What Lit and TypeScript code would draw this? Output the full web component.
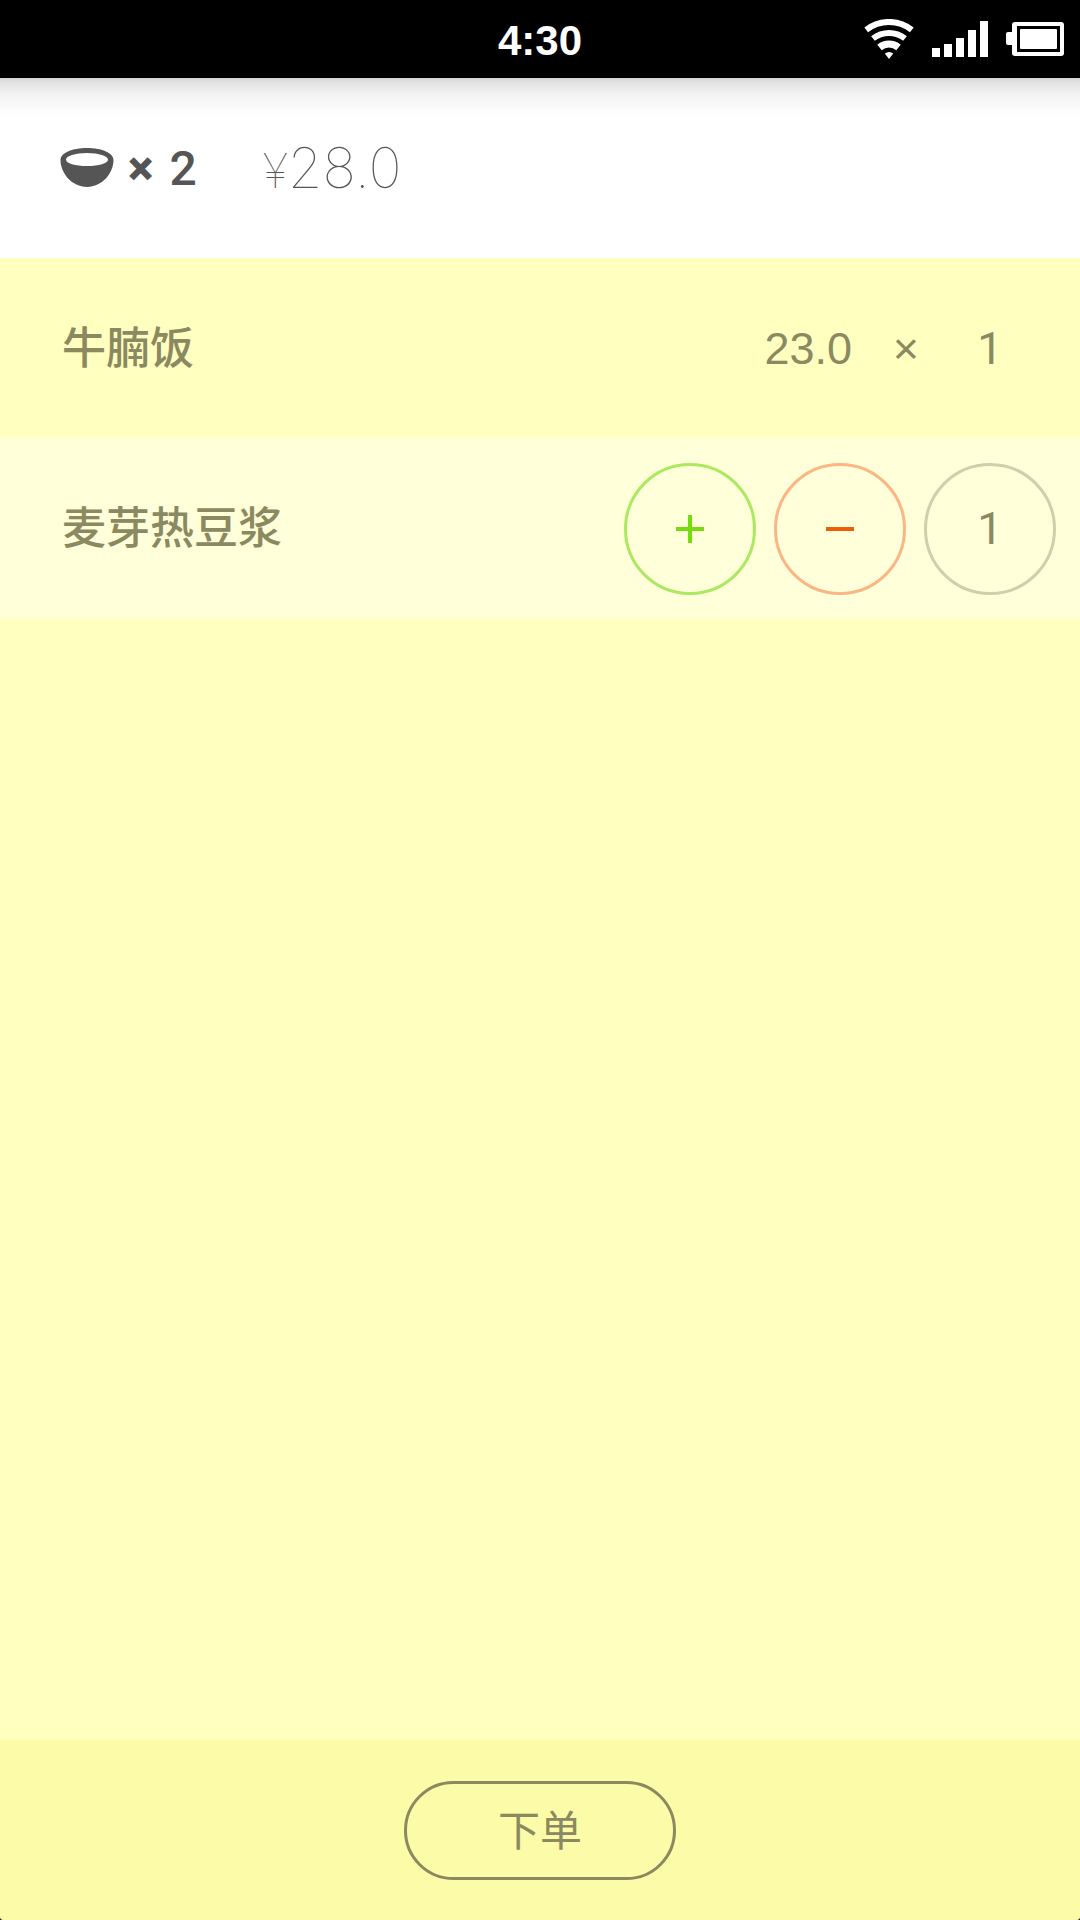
import { LitElement, html, css, svg } from "lit";
import { customElement, state } from "lit/decorators.js";

interface Dish {
  name: string;
  price: number;
  count: number;
}

const wifiIcon = svg`
  <svg width="50" height="40" viewBox="0 0 50 40" aria-hidden="true">
    <g fill="none" stroke="#fff" stroke-width="6">
      <path d="M2.200 10.8A37 37 0 0 1 47.8 10.8" />
      <path d="M9 19.5A26 26 0 0 1 41 19.5" />
      <path d="M15.5 28.5A15 15 0 0 1 34.5 28.5" stroke-width="7" />
    </g>
    <path d="M25 40L20.8 34.6Q25 31.4 29.2 34.6Z" fill="#fff" />
  </svg>`;

const signalIcon = svg`
  <svg width="56" height="36" viewBox="0 0 56 36" fill="#fff" aria-hidden="true">
    <rect x="0" y="27" width="8" height="9" />
    <rect x="12" y="23" width="8" height="13" />
    <rect x="24" y="17" width="8" height="19" />
    <rect x="36" y="9" width="8" height="27" />
    <rect x="48" y="0" width="8" height="36" />
  </svg>`;

const batteryIcon = svg`
  <svg width="58" height="34" viewBox="0 0 58 34" aria-hidden="true">
    <rect x="0" y="10" width="8" height="13" rx="2" fill="#fff" />
    <rect x="6" y="0" width="52" height="34" rx="3" fill="#fff" />
    <rect x="11" y="4" width="43" height="26" fill="#000" />
    <rect x="14" y="7" width="37" height="20" rx="1" fill="#fff" />
  </svg>`;

const bowlIcon = svg`
  <svg width="54" height="40" viewBox="0 0 54 40" aria-hidden="true">
    <path
      fill="#555"
      fill-rule="evenodd"
      d="M27 0C42 0 53.500 5 53.500 12C53.500 25 42 39 27 39C12 39 .5 25 .5 12C.5 5 12 0 27 0ZM27 5C15 5 6 8 6 11.500C6 15.500 15 18 27 18C39 18 48 15.500 48 11.500C48 8 39 5 27 5Z"
    />
  </svg>`;

@customElement("app-root")
export class AppRoot extends LitElement {
  static styles = css`
    :host {
      display: flex;
      flex-direction: column;
      min-height: 100vh;
      background: #000;
      color: #8b8960;
      font-family: "Liberation Sans", "Noto Sans CJK SC", sans-serif;
      font-size: 45px;
      line-height: 54px;
    }
    svg {
      display: block;
    }
    .status {
      display: grid;
      grid-template-columns: 1fr auto 1fr;
      align-items: center;
      height: 78px;
      color: #fff;
    }
    .clock {
      grid-column: 2;
      padding-top: 4px;
      font-size: 42px;
      font-weight: 700;
    }
    .indicators {
      display: flex;
      justify-content: flex-end;
      align-items: center;
      gap: 18px;
      padding-right: 16px;
    }
    .summary {
      display: flex;
      align-items: center;
      height: 180px;
      padding: 0 60px;
      box-sizing: border-box;
      background: linear-gradient(#d2d2d2, #e2e2e2 4px, #f4f4f4 18px, #fff 40px);
      color: #555;
    }
    .times,
    .total-count {
      padding-top: 2px;
      font-family: Roboto, sans-serif;
      font-size: 48px;
    }
    .times {
      margin-left: 14px;
      font-weight: 900;
    }
    .total-count {
      margin-left: 16px;
      font-weight: 500;
    }
    .total-price {
      display: flex;
      align-items: baseline;
      margin-left: 66px;
      padding-top: 2px;
      font-family: Inter, sans-serif;
      font-size: 56px;
      font-weight: 100;
    }
    .currency {
      font-size: 48px;
    }
    .dishes {
      flex: 1;
      margin: 0;
      padding: 0;
      list-style: none;
      background: #ffffc0;
    }
    .dish {
      display: flex;
      align-items: center;
      height: 180px;
      padding: 2px 24px 0 62px;
      box-sizing: border-box;
    }
    .dish.editing {
      gap: 18px;
      background: #ffffd9;
    }
    .name {
      flex: 1;
      font-size: 44px;
      font-weight: 500;
    }
    .by {
      width: 36px;
      margin-left: 36px;
      text-align: center;
    }
    .count {
      width: 132px;
      text-align: center;
      font-family: Roboto, sans-serif;
    }
    .round {
      display: flex;
      align-items: center;
      justify-content: center;
      width: 132px;
      height: 132px;
      padding: 0;
      box-sizing: border-box;
      border: 3px solid #cfcfa8;
      border-radius: 50%;
      background: none;
    }
    .add {
      border-color: #ace961;
    }
    .remove {
      border-color: #fcb585;
    }
    .footer {
      display: flex;
      align-items: center;
      justify-content: center;
      height: 180px;
      border-radius: 0 0 3px 3px;
      background: #fcfba8;
    }
    .order {
      padding: 4px 91px 0;
      height: 99px;
      box-sizing: border-box;
      border: 3px solid #8b8960;
      border-radius: 50px;
      background: none;
      color: inherit;
      font: inherit;
      font-size: 42px;
    }
  `;

  @state() private dishes: Dish[] = [
    { name: "牛腩饭", price: 23, count: 1 },
    { name: "麦芽热豆浆", price: 5, count: 1 },
  ];

  @state() private selected = 1;

  private change(index: number, step: number) {
    this.dishes = this.dishes.map((dish, i) =>
      i === index ? { ...dish, count: Math.max(0, dish.count + step) } : dish
    );
  }

  private renderDish(dish: Dish, index: number) {
    if (index === this.selected) {
      return html`
        <li class="dish editing">
          <span class="name">${dish.name}</span>
          <button class="round add" aria-label="增加" @click=${() => this.change(index, 1)}>
            <svg width="28" height="28" viewBox="0 0 28 28" aria-hidden="true">
              <path d="M0 14H28M14 0V28" stroke="#77db0d" stroke-width="4" />
            </svg>
          </button>
          <button class="round remove" aria-label="减少" @click=${() => this.change(index, -1)}>
            <svg width="28" height="28" viewBox="0 0 28 28" aria-hidden="true">
              <path d="M0 14H28" stroke="#ee5f0c" stroke-width="4" />
            </svg>
          </button>
          <output class="count round">${dish.count}</output>
        </li>
      `;
    }
    return html`
      <li class="dish" @click=${() => (this.selected = index)}>
        <span class="name">${dish.name}</span>
        <span>${dish.price.toFixed(1)}</span>
        <span class="by">×</span>
        <span class="count">${dish.count}</span>
      </li>
    `;
  }

  render() {
    const count = this.dishes.reduce((sum, dish) => sum + dish.count, 0);
    const total = this.dishes.reduce((sum, dish) => sum + dish.price * dish.count, 0);
    return html`
      <div class="status">
        <span class="clock">4:30</span>
        <div class="indicators">${wifiIcon} ${signalIcon} ${batteryIcon}</div>
      </div>
      <header class="summary">
        ${bowlIcon}
        <span class="times">×</span>
        <span class="total-count">${count}</span>
        <span class="total-price"><span class="currency">¥</span>${total.toFixed(1)}</span>
      </header>
      <ul class="dishes">
        ${this.dishes.map((dish, i) => this.renderDish(dish, i))}
      </ul>
      <footer class="footer">
        <button class="order">下单</button>
      </footer>
    `;
  }
}
